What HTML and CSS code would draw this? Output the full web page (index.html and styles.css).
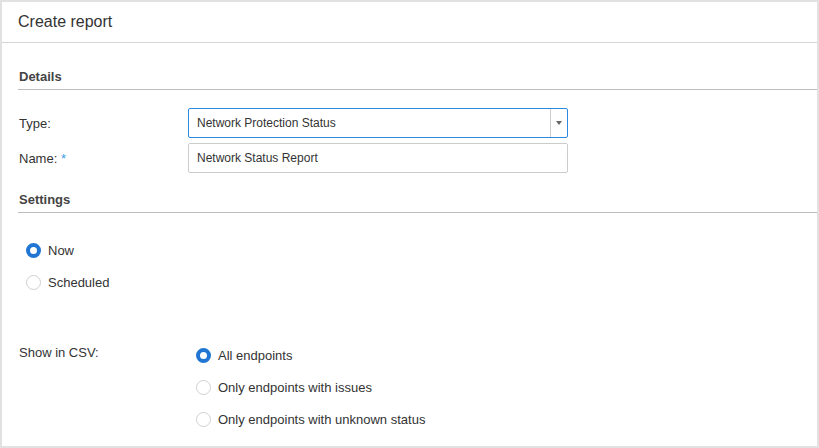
FILE: index.html
```html
<!DOCTYPE html>
<html>
<head>
<meta charset="utf-8">
<link rel="stylesheet" href="styles.css">
</head>
<body>
<div class="frame">
  <div class="header">Create report</div>
  <div class="content">
    <div class="section-title">Details</div>
    <div class="form-row first">
      <div class="label">Type:</div>
      <div class="select">
        <span class="select-text">Network Protection Status</span>
        <span class="select-btn"><svg width="6" height="4" viewBox="0 0 6 4"><path d="M0 0h6L3 4z" fill="#666"/></svg></span>
      </div>
    </div>
    <div class="form-row">
      <div class="label">Name: <span class="req">*</span></div>
      <div class="input">Network Status Report</div>
    </div>
    <div class="section-title second">Settings</div>
    <div class="radio-group when">
      <div class="radio-row"><span class="radio checked"></span><span>Now</span></div>
      <div class="radio-row"><span class="radio"></span><span>Scheduled</span></div>
    </div>
    <div class="csv-row">
      <div class="csv-label">Show in CSV:</div>
      <div class="radio-group">
        <div class="radio-row"><span class="radio checked"></span><span>All endpoints</span></div>
        <div class="radio-row"><span class="radio"></span><span>Only endpoints with issues</span></div>
        <div class="radio-row"><span class="radio"></span><span>Only endpoints with unknown status</span></div>
      </div>
    </div>
  </div>
</div>
</body>
</html>
```
FILE: styles.css
```css
* { box-sizing: border-box; }
html, body { margin: 0; padding: 0; background: #fff; }
body {
  font-family: "Liberation Sans", Arial, sans-serif;
  font-size: 13px;
  color: #333;
}
.frame {
  width: 819px;
  height: 448px;
  border: 2px solid #e1e1e1;
  background: #fff;
  overflow: hidden;
}
.header {
  height: 41px;
  border-bottom: 1px solid #d6d6d6;
  padding: 10px 0 0 16px;
  font-size: 16px;
  line-height: 20px;
  color: #333;
}
.content {
  padding-left: 16px;
}
.section-title {
  margin-top: 26px;
  font-weight: bold;
  font-size: 13px;
  line-height: 16px;
  color: #444;
  padding: 0 0 4px 1px;
  border-bottom: 1px solid #bdbdbd;
}
.section-title.second { margin-top: 19px; }
.form-row {
  display: flex;
  align-items: center;
  margin-top: 5px;
}
.form-row.first { margin-top: 18px; }
.label {
  width: 170px;
  padding-left: 1px;
}
.req { color: #3b9de6; }
.select, .input {
  width: 380px;
  height: 30px;
  border: 1px solid #ccc;
  border-radius: 2px;
  font-size: 12px;
  display: flex;
  align-items: center;
}
.select { border-color: #2d8ae0; }
.select-text { flex: 1; padding-left: 8px; }
.input { padding-left: 8px; }
.select-btn {
  width: 17px;
  height: 100%;
  border-left: 1px solid #ccc;
  display: flex;
  align-items: center;
  justify-content: center;
}
.radio-group { display: flex; flex-direction: column; }
.when { margin-top: 21px; padding-left: 8px; }
.radio-row {
  height: 32px;
  display: flex;
  align-items: center;
  gap: 7px;
}
.radio {
  width: 15px;
  height: 15px;
  border-radius: 50%;
  border: 1px solid #d0d0d0;
  background: #fff;
}
.radio.checked { border: 4.5px solid #2076d2; }
.csv-row {
  display: flex;
  margin-top: 41px;
}
.csv-label {
  width: 178px;
  padding: 6px 0 0 1px;
}
```
